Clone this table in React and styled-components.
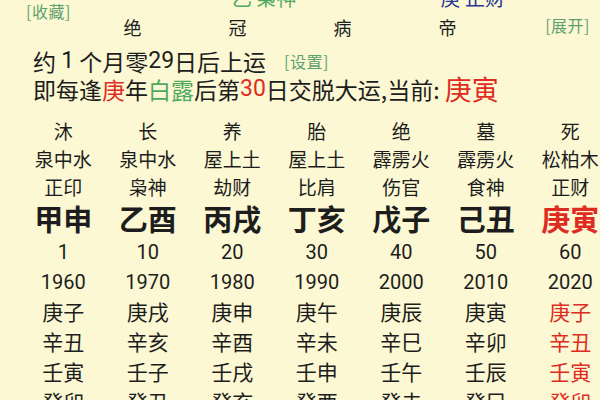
import React from "react";
import styled, { createGlobalStyle } from "styled-components";

const GlobalStyle = createGlobalStyle`
	html, body {
		margin: 0;
		padding: 0;
		background: #fbf8d3;
	}
`;

const RED = "#df2c22";
const GREEN = "#4fa860";
const LINK = "#5e9f6e";
const BLUE = "#2b3896";
const INK = "#1d1d1d";

const columns = [
	{ stage: "沐", nayin: "泉中水", god: "正印", pillar: "甲申", age: 1, year: 1960, years: ["庚子", "辛丑", "壬寅", "癸卯"] },
	{ stage: "长", nayin: "泉中水", god: "枭神", pillar: "乙酉", age: 10, year: 1970, years: ["庚戌", "辛亥", "壬子", "癸丑"] },
	{ stage: "养", nayin: "屋上土", god: "劫财", pillar: "丙戌", age: 20, year: 1980, years: ["庚申", "辛酉", "壬戌", "癸亥"] },
	{ stage: "胎", nayin: "屋上土", god: "比肩", pillar: "丁亥", age: 30, year: 1990, years: ["庚午", "辛未", "壬申", "癸酉"] },
	{ stage: "绝", nayin: "霹雳火", god: "伤官", pillar: "戊子", age: 40, year: 2000, years: ["庚辰", "辛巳", "壬午", "癸未"] },
	{ stage: "墓", nayin: "霹雳火", god: "食神", pillar: "己丑", age: 50, year: 2010, years: ["庚寅", "辛卯", "壬辰", "癸巳"] },
	{ stage: "死", nayin: "松柏木", god: "正财", pillar: "庚寅", age: 60, year: 2020, years: ["庚子", "辛丑", "壬寅", "癸卯"], current: true },
];

const headStages = ["绝", "冠", "病", "帝"];

const Page = styled.div`
	width: 600px;
	height: 400px;
	overflow: hidden;
	background: #fbf8d3;
	color: ${INK};
	font-family: "Noto Sans CJK SC", sans-serif;
`;

const Header = styled.div`
	display: grid;
	grid-template-columns: 28px 52px repeat(4, 105px) 1fr;
	grid-template-rows: 8px 38px;
`;

const CutLabels = styled.div`
	grid-column: 2 / 8;
	grid-row: 1;
	align-self: end;
	display: flex;
	padding-left: 204px;
	gap: 144px;
	font-size: 20px;
	line-height: 20px;
	white-space: nowrap;
`;

const Tag = styled.span`
	color: ${(p) => p.$color};
`;

const Link = styled.span`
	color: ${LINK};
	font-size: 16px;
	line-height: 20px;
	letter-spacing: 0.5px;
	margin-left: ${(p) => p.$gap || 0}px;
`;

const Collect = styled(Link)`
	grid-column: 2;
	grid-row: 1 / 3;
	align-self: start;
	margin-top: 1px;
	margin-left: -2px;
`;

const Stage = styled.span`
	grid-row: 2;
	grid-column: ${(p) => p.$col};
	text-align: center;
	font-size: 18px;
	line-height: 38px;
`;

const Expand = styled(Link)`
	grid-row: 2;
	grid-column: 7;
	align-self: center;
	justify-self: end;
	margin-right: 10px;
	margin-top: -4px;
`;

const Line = styled.div`
	padding-left: 33px;
	height: ${(p) => p.$h}px;
	line-height: ${(p) => p.$h}px;
	display: flex;
	align-items: center;
	font-size: 23px;
	white-space: nowrap;
`;

const Num = styled.span`
	font-family: Roboto, "Noto Sans CJK SC", sans-serif;
	color: ${(p) => p.$color || "inherit"};
`;

const Hl = styled.span`
	color: ${(p) => p.$color};
	font-size: ${(p) => p.$size || 23}px;
`;

const Table = styled.div`
	display: grid;
	grid-template-columns: repeat(7, 84.5px);
	grid-template-rows: 30px 27px 28px 36px 32px 28px 30px 30px 30px 30px;
	padding: 13px 0 0 21px;
	width: max-content;
`;

const Cell = styled.div`
	display: flex;
	align-items: center;
	justify-content: center;
	white-space: nowrap;
	font-size: ${(p) => p.$size}px;
	font-weight: ${(p) => (p.$bold ? 700 : 400)};
	font-family: ${(p) => (p.$digits ? 'Roboto, "Noto Sans CJK SC", sans-serif' : '"Noto Sans CJK SC", sans-serif')};
	color: ${(p) => (p.$red ? RED : INK)};
`;

const rows = [
	{ key: "stage", size: 19 },
	{ key: "nayin", size: 19 },
	{ key: "god", size: 19 },
	{ key: "pillar", size: 29, bold: true, red: true },
	{ key: "age", size: 20, digits: true },
	{ key: "year", size: 20, digits: true },
	{ key: 0, size: 21, red: true, list: true },
	{ key: 1, size: 21, red: true, list: true },
	{ key: 2, size: 21, red: true, list: true },
	{ key: 3, size: 21, red: true, list: true },
];

export default function App() {
	return (
		<Page>
			<GlobalStyle />
			<Header>
				<CutLabels>
					<Tag $color={GREEN}>乙 枭神</Tag>
					<Tag $color={BLUE}>庚 正财</Tag>
				</CutLabels>
				<Collect>[收藏]</Collect>
				{headStages.map((s, i) => (
					<Stage key={s} $col={i + 3}>
						{s}
					</Stage>
				))}
				<Expand>[展开]</Expand>
			</Header>

			<Line $h={30}>
				约&nbsp;<Num>1</Num>&nbsp;个月零<Num>29</Num>日后上运
				<Link $gap={18}>[设置]</Link>
			</Line>
			<Line $h={26}>
				即每逢<Hl $color={RED}>庚</Hl>年<Hl $color={GREEN}>白露</Hl>后第
				<Num $color={RED}>30</Num>日交脱大运,当前:&nbsp;
				<Hl $color={RED} $size={27}>
					庚寅
				</Hl>
			</Line>

			<Table>
				{rows.map((row) =>
					columns.map((col, i) => (
						<Cell
							key={`${row.key}-${i}`}
							$size={row.size}
							$bold={row.bold}
							$digits={row.digits}
							$red={row.red && col.current}
						>
							{row.list ? col.years[row.key] : col[row.key]}
						</Cell>
					)),
				)}
			</Table>
		</Page>
	);
}
